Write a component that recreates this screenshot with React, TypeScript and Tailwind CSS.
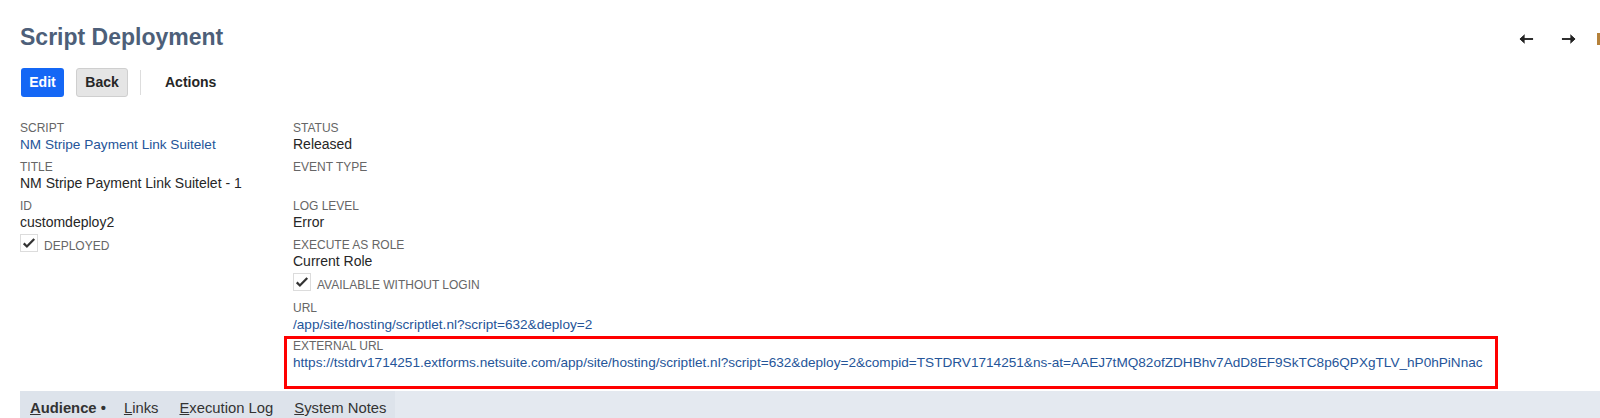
import type { ReactNode } from "react";

const font = { fontFamily: '"Liberation Sans", Arial, sans-serif' };

function Field({ label, children }: { label: string; children?: ReactNode }) {
  return (
    <div className="flex flex-col pb-[7px]">
      <span className="h-[15px] text-[12px] leading-[15px] uppercase text-[#666666]">{label}</span>
      <span className="min-h-[17px] text-[14px] leading-[17px] text-[#262626]">{children}</span>
    </div>
  );
}

function Check({ label }: { label: string }) {
  return (
    <div className="-mt-[4px] flex items-start gap-[6px] pb-[8px]">
      <span className="flex h-[18px] w-[18px] items-center justify-center border border-[#dcdcdc] bg-white">
        <svg viewBox="0 0 16 16" className="h-[14px] w-[14px]">
          <path d="M2 8.5 L5.6 12 L14 3.5" fill="none" stroke="#333" strokeWidth="2.6" />
        </svg>
      </span>
      <span className="mt-[5px] text-[12px] leading-[15px] uppercase text-[#666666]">{label}</span>
    </div>
  );
}

const linkCls = "text-[13.6px] text-[#255599]";

export default function App() {
  return (
    <div className="relative h-[418px] w-[1600px] overflow-hidden bg-white" style={font}>
      {/* header */}
      <div className="flex items-start justify-between pl-[20px] pt-[24px]">
        <h1 className="text-[23px] font-bold leading-[27px] text-[#4d5f79]">Script Deployment</h1>
        <div className="-mr-[3px] flex items-center pt-[9px]">
          <svg viewBox="0 0 16 12" className="h-[12px] w-[15px]">
            <path d="M15 6H3" stroke="#222" strokeWidth="2" />
            <path d="M6 1.5 L1 6 L6 10.5" fill="#222" stroke="#222" strokeWidth="1" />
          </svg>
          <svg viewBox="0 0 16 12" className="ml-[27px] h-[12px] w-[15px]">
            <path d="M1 6H13" stroke="#222" strokeWidth="2" />
            <path d="M10 1.5 L15 6 L10 10.5" fill="#222" stroke="#222" strokeWidth="1" />
          </svg>
          <span className="ml-[21px] h-[12px] w-[6px] bg-[#b5813a]" />
        </div>
      </div>

      {/* buttons */}
      <div className="mt-[17px] flex items-center pl-[21px]">
        <button className="h-[29px] w-[43px] rounded-[3px] bg-[#1467f5] text-[14px] font-bold text-white">Edit</button>
        <button className="ml-[12px] h-[29px] w-[52px] rounded-[3px] border border-[#cfcfcf] bg-[#e5e5e5] text-[14px] font-bold text-[#262626]">
          Back
        </button>
        <span className="ml-[12px] h-[25px] w-px bg-[#dddddd]" />
        <span className="ml-[24px] text-[14px] font-bold text-[#262626]">Actions</span>
      </div>

      {/* fields */}
      <div className="mt-[24px] flex">
        <div className="w-[293px] pl-[20px]">
          <Field label="Script">
            <span className={linkCls}>NM Stripe Payment Link Suitelet</span>
          </Field>
          <Field label="Title">NM Stripe Payment Link Suitelet - 1</Field>
          <Field label="ID">customdeploy2</Field>
          <Check label="Deployed" />
        </div>
        <div className="flex flex-col">
          <Field label="Status">Released</Field>
          <Field label="Event Type" />
          <Field label="Log Level">Error</Field>
          <Field label="Execute as Role">Current Role</Field>
          <Check label="Available without login" />
          <Field label="URL">
            <span className={linkCls}>/app/site/hosting/scriptlet.nl?script=632&amp;deploy=2</span>
          </Field>
          <div className="-ml-[9px] -mt-[4px] h-[53px] w-[1214px] border-[3px] border-[#ff0000] pl-[6px]">
            <div className="flex flex-col">
              <span className="h-[15px] text-[12px] leading-[15px] uppercase text-[#666666]">External URL</span>
              <span className={`whitespace-nowrap leading-[17px] ${linkCls}`}>
                https://tstdrv1714251.extforms.netsuite.com/app/site/hosting/scriptlet.nl?script=632&amp;deploy=2&amp;compid=TSTDRV1714251&amp;ns-at=AAEJ7tMQ82ofZDHBhv7AdD8EF9SkTC8p6QPXgTLV_hP0hPiNnac
              </span>
            </div>
          </div>
        </div>
      </div>

      {/* tabs */}
      <div className="ml-[20px] mt-[2px] flex h-[28px] bg-[#e4e9f0]">
        <div className="flex items-center bg-[#dde3eb] pl-[10px] pr-[9px] pt-[6px] text-[14.8px] text-[#333]">
          <span className="font-bold">
            <span className="underline">A</span>udience •
          </span>
          <span className="ml-[18px]">
            <span className="underline">L</span>inks
          </span>
          <span className="ml-[21px]">
            <span className="underline">E</span>xecution Log
          </span>
          <span className="ml-[21px]">
            <span className="underline">S</span>ystem Notes
          </span>
        </div>
      </div>
    </div>
  );
}
